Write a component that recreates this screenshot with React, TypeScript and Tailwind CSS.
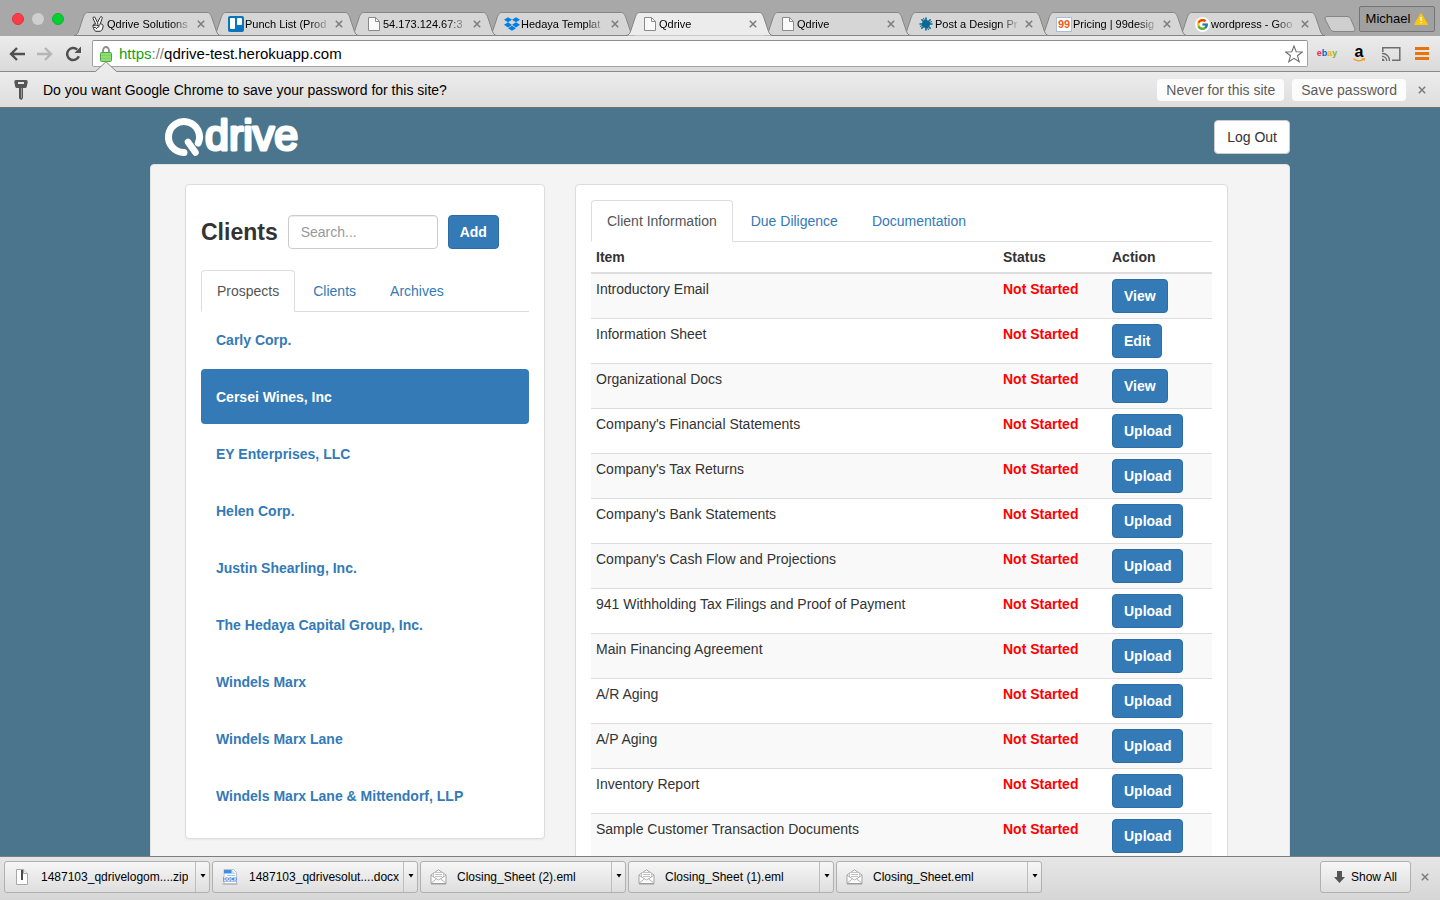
import type { ReactNode } from "react";
import clsx from "clsx";
import { FaDropbox } from "react-icons/fa";
import { FcGoogle } from "react-icons/fc";

interface IBrowserTab {
  title: string;
  icon: ReactNode;
  active?: boolean;
}

interface IDownload {
  name: string;
  icon: ReactNode;
}

interface IItem {
  name: string;
  action: string;
}

const clients = [
  "Carly Corp.",
  "Cersei Wines, Inc",
  "EY Enterprises, LLC",
  "Helen Corp.",
  "Justin Shearling, Inc.",
  "The Hedaya Capital Group, Inc.",
  "Windels Marx",
  "Windels Marx Lane",
  "Windels Marx Lane & Mittendorf, LLP",
];

const items: IItem[] = [
  { name: "Introductory Email", action: "View" },
  { name: "Information Sheet", action: "Edit" },
  { name: "Organizational Docs", action: "View" },
  { name: "Company's Financial Statements", action: "Upload" },
  { name: "Company's Tax Returns", action: "Upload" },
  { name: "Company's Bank Statements", action: "Upload" },
  { name: "Company's Cash Flow and Projections", action: "Upload" },
  { name: "941 Withholding Tax Filings and Proof of Payment", action: "Upload" },
  { name: "Main Financing Agreement", action: "Upload" },
  { name: "A/R Aging", action: "Upload" },
  { name: "A/P Aging", action: "Upload" },
  { name: "Inventory Report", action: "Upload" },
  { name: "Sample Customer Transaction Documents", action: "Upload" },
];

function PageIcon() {
  return (
    <svg width="12" height="14" viewBox="0 0 12 14" fill="#fafafa" stroke="#8a8a8a">
      <path d="M.5 .5H7.5L11.5 4.5V13.5H.5Z" />
      <path d="M7.5 .5V4.5H11.5" fill="none" />
    </svg>
  );
}

function PeaceIcon() {
  return (
    <svg width="12" height="16" viewBox="0 0 12 16" fill="#f4f4f4" stroke="#333" strokeLinejoin="round">
      <path d="M3.600 8L1 2.500Q.8 1 2 .9Q2.800 .8 3.200 1.800L5.500 6.500L8 1.500Q8.800 .2 9.800 .8Q10.600 1.300 10.200 2.400L8.300 7.500Q11 8 11.200 10Q11.200 13.500 8.500 15.300H3.500Q1 13 .9 9.800Q1.200 7.600 3.600 8Z" />
      <path d="M1.200 9.500Q4 8.500 7 9.800Q7.500 11.200 5 11.500M5.500 6.500L6 8.800M2 11.500Q3.800 10.500 4.800 13M8.300 7.500L7.500 9.500" fill="none" />
    </svg>
  );
}

function TrelloIcon() {
  return (
    <svg width="16" height="16" viewBox="0 0 16 16" fill="#fff">
      <rect width="16" height="16" rx="2" fill="#0a74bd" />
      <rect x="2" y="2" width="5" height="11" rx="1" />
      <rect x="9" y="2" width="5" height="7" rx="1" />
    </svg>
  );
}

function BurstIcon() {
  return (
    <svg width="14" height="14" viewBox="0 0 14 14" stroke="#0a6a93" strokeLinecap="round">
      <circle cx="7" cy="7" r="3.6" fill="#0a6a93" />
      <path d="M7 1V13M1 7H13M2.8 2.8L11.2 11.2M11.2 2.8L2.8 11.2" strokeWidth="1.6" />
      <path d="M4.6 1.3L9.4 12.7M12.7 4.6L1.3 9.4" strokeWidth="1" />
    </svg>
  );
}

function CloseIcon() {
  return (
    <svg width="8" height="8" viewBox="0 0 8 8" stroke="#7c7c7c" strokeWidth="1.5">
      <path d="M.8 .8L7.2 7.2M7.2 .8L.8 7.2" />
    </svg>
  );
}

function EnvelopeIcon() {
  return (
    <svg width="17" height="16" viewBox="0 0 17 16" fill="#fbfbfb" stroke="#a3a3a3" strokeLinejoin="round">
      <path d="M1 6L8.5 .8L16 6V14.5H1Z" />
      <path d="M3.5 8V3.5H13.5V8" stroke="#c4c4c4" />
      <path d="M5 5.5H12M5 7.5H12" stroke="#c4c4c4" />
      <path d="M1 6.3L8.5 11L16 6.3M1 14.3L6.5 9.8M16 14.3L10.5 9.8" fill="none" stroke="#b4b4b4" />
      <path d="M1 15H16" stroke="#9a9a9a" />
    </svg>
  );
}

function ZipIcon() {
  return (
    <svg width="12" height="16" viewBox="0 0 12 16">
      <path d="M.5 .5H7.5L11.5 4.5V15.5H.5Z" fill="#fff" stroke="#a8a8a8" />
      <path d="M7.5 .5V4.5H11.5" fill="#eee" stroke="#a8a8a8" />
      <path d="M6 1V11" stroke="#4a4a4a" strokeWidth="2" />
    </svg>
  );
}

function DocxIcon() {
  return (
    <svg width="16" height="16" viewBox="0 0 16 16">
      <path d="M2 .5H11.5L14.5 3.5V15H2Z" fill="#fff" stroke="#b9c3cf" />
      <path d="M2 1H10V4.5H2Z" fill="#3f8fe8" />
      <path d="M9.5 .8L14.3 5H9.5Z" fill="#c5dcf7" />
      <path d="M5 6.5H13" stroke="#a9c6ea" />
      <rect x="1" y="8" width="14" height="4.5" fill="#4a88d8" />
      <text x="8" y="12" textAnchor="middle" fontSize="4.5" fontWeight="700" fill="#fff" fontFamily="Liberation Sans, sans-serif">
        DOCX
      </text>
      <path d="M.5 15H15.5" stroke="#a8a8a8" />
    </svg>
  );
}

function KeyIcon() {
  return (
    <svg width="14" height="20" viewBox="0 0 14 20">
      <path
        fillRule="evenodd"
        fill="#555"
        d="M2 0H12Q14 0 13.7 2L12.8 6.5Q12.5 8 11 8H9V18L7.5 20L5 18.5V8H3Q1.500 8 1.200 6.500L.3 2Q0 0 2 0ZM4 2V4H10V2Z"
      />
      <path d="M7.500 8V18" stroke="#9a9a9a" />
    </svg>
  );
}

const browserTabs: IBrowserTab[] = [
  { title: "Qdrive Solutions", icon: <PeaceIcon /> },
  { title: "Punch List (Prod", icon: <TrelloIcon /> },
  { title: "54.173.124.67:3", icon: <PageIcon /> },
  { title: "Hedaya Templat", icon: <FaDropbox size={16} color="#007ee5" /> },
  { title: "Qdrive", icon: <PageIcon />, active: true },
  { title: "Qdrive", icon: <PageIcon /> },
  { title: "Post a Design Pr", icon: <BurstIcon /> },
  {
    title: "Pricing | 99desig",
    icon: (
      <span className="border border-[#a9bedb] bg-white px-px text-[11px] leading-[13px] font-bold text-[#f15a22]">
        99
      </span>
    ),
  },
  {
    title: "wordpress - Goo",
    icon: (
      <span className="rounded-full bg-white p-px">
        <FcGoogle size={13} />
      </span>
    ),
  },
];

const downloads: IDownload[] = [
  { name: "1487103_qdrivelogom....zip", icon: <ZipIcon /> },
  { name: "1487103_qdrivesolut....docx", icon: <DocxIcon /> },
  { name: "Closing_Sheet (2).eml", icon: <EnvelopeIcon /> },
  { name: "Closing_Sheet (1).eml", icon: <EnvelopeIcon /> },
  { name: "Closing_Sheet.eml", icon: <EnvelopeIcon /> },
];

function BrowserTab({ tab, order }: { tab: IBrowserTab; order: number }) {
  return (
    <div
      className="relative -mr-[9px] flex h-6 w-[147px] min-w-0 items-center pr-4 pl-[15px]"
      style={{ zIndex: tab.active ? 20 : order }}
    >
      <svg
        className="absolute inset-0 h-full w-full"
        viewBox="0 0 147 24"
        preserveAspectRatio="none"
        fill={tab.active ? "#ececec" : "#d6d6d6"}
        stroke="#858585"
      >
        <path d="M0 23.500C3 23.500 4 21 5 18L9 6C10.500 2 11.500 .5 14 .5H133C135.500 .5 136.500 2 138 6L142 18C143 21 144 23.500 147 23.500" />
        {!tab.active && <path d="M0 23.500H147" />}
      </svg>
      <span className="relative flex w-[18px] shrink-0 justify-center">{tab.icon}</span>
      <button
        className={clsx(
          "relative min-w-0 flex-1 text-left text-[11px] whitespace-nowrap",
          "[mask-image:linear-gradient(to_right,black_75%,transparent)]"
        )}
      >
        {tab.title}
      </button>
      <button aria-label={`Close ${tab.title}`} className="relative pl-1">
        <CloseIcon />
      </button>
    </div>
  );
}

function TabStrip() {
  return (
    <div className="flex h-9 shrink-0 bg-[#a8a8a8]">
      <div className="flex w-[74px] shrink-0 gap-2 pt-[13px] pl-3">
        <span className="size-3 rounded-full border border-[#e0323c] bg-[#fc3d49]" />
        <span className="size-3 rounded-full bg-[#cfcfcf]" />
        <span className="size-3 rounded-full border border-[#0fb52c] bg-[#05cf33]" />
      </div>
      <div className="flex min-w-0 flex-1 items-end">
        {browserTabs.map((tab, index) => (
          <BrowserTab tab={tab} order={browserTabs.length - index} key={index} />
        ))}
        <button aria-label="New tab" className="mb-1 ml-2 shrink-0">
          <svg width="32" height="16" viewBox="0 0 32 16" fill="#cfcfcf" stroke="#858585">
            <path d="M3 .5H23Q25.500 .5 26.500 2.500L31 13Q31.500 15.500 29 15.500H10Q7.500 15.500 6.500 13.500L1 3Q.5 .5 3 .5Z" />
          </svg>
        </button>
      </div>
      <button className="mt-[6px] mr-[5px] flex h-[26px] w-[76px] shrink-0 items-center justify-center gap-1 rounded-xs border border-[#757575] bg-[#a0a0a0] text-[13px]">
        Michael
        <svg width="14" height="12" viewBox="0 0 14 12">
          <path d="M7 .5L13.500 11.500H.5Z" fill="#fdc70c" stroke="#fdc70c" strokeLinejoin="round" />
          <path d="M7 4V8M7 9V10.300" stroke="#fff" strokeWidth="1.400" />
        </svg>
      </button>
    </div>
  );
}

function Toolbar() {
  return (
    <div className="relative z-10 flex h-9 shrink-0 items-center border-b border-[#8a8a8a] bg-linear-to-b from-[#ececec] to-[#dadada] pr-[11px] pl-[9px]">
      <button aria-label="Back" className="mr-3">
        <svg width="16" height="14" viewBox="0 0 16 14" fill="none" stroke="#505050" strokeWidth="2.400">
          <path d="M16 7H2.500M8 1L2 7L8 13" />
        </svg>
      </button>
      <button aria-label="Forward" className="mr-3">
        <svg width="16" height="14" viewBox="0 0 16 14" fill="none" stroke="#b5b5b5" strokeWidth="2.400">
          <path d="M0 7H13.500M8 1L14 7L8 13" />
        </svg>
      </button>
      <button aria-label="Reload" className="mr-[10px]">
        <svg width="17" height="16" viewBox="0 0 17 16">
          <path d="M13.800 10.200A6 6 0 1 1 12.200 3.600" fill="none" stroke="#505050" strokeWidth="2.500" />
          <path d="M16 .5V7H9.500Z" fill="#505050" />
        </svg>
      </button>
      <div className="relative flex h-[27px] min-w-0 flex-1 items-center rounded-xs border border-[#a3a3a3] border-t-[#8f8f8f] bg-white pr-1 pl-[7px]">
        <svg width="12" height="16" viewBox="0 0 12 16">
          <path d="M3 8V4.500A3 3.500 0 0 1 9 4.500V8" fill="none" stroke="#8c8c8c" strokeWidth="1.800" />
          <rect x=".5" y="6.500" width="11" height="9" rx="1" fill="#8ddd72" stroke="#4fa83c" />
          <path d="M1 9.500H11M1 12.500H11" stroke="#7fd068" />
        </svg>
        <a href="#" className="ml-[7px] flex-1 pt-px text-[15px] text-black">
          <span className="text-[#12a012]">https</span>
          <span className="text-[#808080]">://</span>
          qdrive-test.herokuapp.com
        </a>
        <button aria-label="Bookmark this page">
          <svg width="18" height="18" viewBox="0 0 18 18" fill="#fff" stroke="#6e6e6e" strokeWidth="1.100">
            <path d="M9 1L11.200 6.700L17.300 7L12.500 10.800L14.200 16.700L9 13.300L3.800 16.700L5.500 10.800L.7 7L6.800 6.700Z" />
          </svg>
        </button>
      </div>
      <button className="ml-2 w-[22px] text-[9px] font-bold">
        <span className="text-[#e53238]">e</span>
        <span className="text-[#0064d2]">b</span>
        <span className="text-[#f5af02]">a</span>
        <span className="text-[#86b817]">y</span>
      </button>
      <button className="ml-[13px] flex w-4 flex-col items-center text-base leading-3 font-bold">
        a
        <svg width="12" height="4" viewBox="0 0 12 4" fill="none" stroke="#f79a1c" strokeWidth="1.300">
          <path d="M.5 .8Q6 5 11 1M8.500 .8H11.300V2.500" />
        </svg>
      </button>
      <button aria-label="Cast" className="ml-[14px]">
        <svg width="20" height="16" viewBox="0 0 20 16" fill="none" stroke="#6e6e6e" strokeWidth="1.500">
          <path d="M1.800 6V1.800H18.800V14.200H11" />
          <path d="M1 7.500A7 7 0 0 1 8.500 15M1 10.300A4.500 4.500 0 0 1 5.700 15" strokeWidth="1.300" />
          <path d="M1 12.500A2.500 2.500 0 0 1 3.500 15H1Z" fill="#6e6e6e" stroke="none" />
        </svg>
      </button>
      <button aria-label="Menu" className="ml-[14px]">
        <svg width="14" height="13" viewBox="0 0 14 13" stroke="#e8730c" strokeWidth="3">
          <path d="M0 1.500H14M0 6.500H14M0 11.500H14" />
        </svg>
      </button>
      {/* pointer from the info bar to the lock */}
      <svg className="absolute top-[25px] left-[94px]" width="24" height="12" viewBox="0 0 24 12">
        <path d="M1 11L12 .8L23 11V12H1Z" fill="#ebebeb" />
        <path d="M0 10.500H1.500L12 .8L22.500 10.500H24" fill="none" stroke="#8a8a8a" />
      </svg>
    </div>
  );
}

function InfoBar() {
  return (
    <div className="flex h-9 shrink-0 items-center border-b border-[#707070] bg-linear-to-b from-[#ececec] to-[#dedede] pr-[14px] pl-[14px] text-sm">
      <KeyIcon />
      <p className="ml-[15px] flex-1">
        Do you want Google Chrome to save your password for this site?
      </p>
      <button className="h-[22px] rounded-sm bg-[#fcfcfc] px-[9px] text-[#5c5c5c]">
        Never for this site
      </button>
      <button className="ml-2 h-[22px] rounded-sm bg-[#fcfcfc] px-[9px] text-[#5c5c5c]">
        Save password
      </button>
      <button aria-label="Dismiss" className="ml-3">
        <CloseIcon />
      </button>
    </div>
  );
}

function Logo() {
  return (
    <svg width="144" height="56" viewBox="0 0 144 56" role="img" aria-label="Qdrive">
      <g fill="none" stroke="#fff" strokeWidth="7" strokeLinecap="round">
        <path d="M20 44.500A15.500 15.500 0 1 1 34.300 35" />
        <path d="M24 34L31.500 44.500" strokeWidth="6.500" />
      </g>
      <text
        x="41"
        y="42"
        fontSize="43"
        fontFamily="Liberation Sans, Arial, sans-serif"
        fill="#fff"
        stroke="#fff"
        strokeWidth="3"
        strokeLinejoin="round"
      >
        drive
      </text>
    </svg>
  );
}

function NavTabs({ tabs, label }: { tabs: string[]; label: string }) {
  return (
    <nav aria-label={label} className="flex border-b border-[#ddd]">
      {tabs.map((tab, index) => (
        <a
          href="#"
          key={tab}
          className={clsx(
            "-mb-px mr-[2px] rounded-t border px-[15px] py-[10px] leading-5",
            index === 0
              ? "border-[#ddd] border-b-white bg-white text-[#555]"
              : "border-transparent text-[#337ab7]"
          )}
        >
          {tab}
        </a>
      ))}
    </nav>
  );
}

function PrimaryButton({ children }: { children: ReactNode }) {
  return (
    <button className="h-[34px] rounded border border-[#2e6da4] bg-[#337ab7] px-[11px] text-sm font-bold text-white">
      {children}
    </button>
  );
}

function ClientsPanel() {
  return (
    <section className="min-w-0 rounded border border-[#ddd] bg-white p-[15px] shadow-xs">
      <div className="mt-[15px] mb-[21px] flex items-center gap-[10px]">
        <h3 className="text-[23px] leading-6 font-bold">Clients</h3>
        <input
          type="text"
          aria-label="Search clients"
          placeholder="Search..."
          className="h-[34px] w-[150px] min-w-0 rounded border border-[#ccc] bg-white px-3 shadow-[inset_0_1px_1px_rgba(0,0,0,0.075)] placeholder:text-[#999]"
        />
        <PrimaryButton>Add</PrimaryButton>
      </div>
      <NavTabs label="Client groups" tabs={["Prospects", "Clients", "Archives"]} />
      <ul className="flex flex-col gap-[2px]">
        {clients.map((client) => (
          <li key={client}>
            <a
              href="#"
              className={clsx(
                "flex h-[55px] items-center rounded px-[15px] font-bold",
                client === "Cersei Wines, Inc"
                  ? "bg-[#337ab7] text-white"
                  : "text-[#337ab7]"
              )}
            >
              {client}
            </a>
          </li>
        ))}
      </ul>
    </section>
  );
}

function ItemsPanel() {
  return (
    <section className="min-w-0 rounded border border-[#ddd] bg-white p-[15px] shadow-xs">
      <NavTabs
        label="Client sections"
        tabs={["Client Information", "Due Diligence", "Documentation"]}
      />
      <table className="w-full text-left leading-5">
        <thead>
          <tr className="border-b-2 border-[#ddd]">
            <th className="p-[5px]">Item</th>
            <th className="w-[109px] p-[5px]">Status</th>
            <th className="w-[105px] p-[5px]">Action</th>
          </tr>
        </thead>
        <tbody>
          {items.map((item) => (
            <tr key={item.name} className="border-t border-[#ddd] align-top odd:bg-[#f9f9f9]">
              <td className="p-[5px]">{item.name}</td>
              <td className="p-[5px] font-bold text-[#f00]">Not Started</td>
              <td className="p-[5px]">
                <div className="flex">
                  <PrimaryButton>{item.action}</PrimaryButton>
                </div>
              </td>
            </tr>
          ))}
        </tbody>
      </table>
    </section>
  );
}

function DownloadBar() {
  return (
    <footer className="flex h-11 shrink-0 items-start gap-[2px] border-t border-[#7d7d7d] bg-linear-to-b from-[#e6e6e6] to-[#d6d6d6] pt-1 pr-[3px] pl-1 text-xs">
      {downloads.map((file) => (
        <div
          key={file.name}
          className="flex h-8 w-[206px] min-w-0 rounded-[3px] border border-[#b0b0b0] bg-linear-to-b from-[#f6f6f6] to-[#dedede]"
        >
          <button className="flex min-w-0 flex-1 items-center pl-2">
            <span className="mr-[10px] flex w-[18px] shrink-0 justify-center">{file.icon}</span>
            <span className="truncate">{file.name}</span>
          </button>
          <button
            aria-label={`Options for ${file.name}`}
            className="flex w-[14px] shrink-0 justify-center border-l border-[#bdbdbd] pt-3"
          >
            <svg width="6" height="4" viewBox="0 0 6 4">
              <path d="M.5 0H5.500L3 3.500Z" />
            </svg>
          </button>
        </div>
      ))}
      <button className="ml-auto flex h-8 w-[91px] shrink-0 items-center justify-center gap-[6px] rounded-[3px] border border-[#b0b0b0] bg-linear-to-b from-[#f6f6f6] to-[#dedede]">
        <svg width="11" height="12" viewBox="0 0 11 12" fill="#555">
          <path d="M3 0H8V6H11L5.500 12L0 6H3Z" />
        </svg>
        Show All
      </button>
      <button aria-label="Close downloads bar" className="flex h-8 items-center px-2">
        <CloseIcon />
      </button>
    </footer>
  );
}

function App() {
  return (
    <div className="flex h-screen flex-col overflow-hidden font-['Liberation_Sans',Arial,sans-serif] text-black">
      <TabStrip />
      <Toolbar />
      <InfoBar />
      <main className="min-h-0 flex-1 overflow-hidden bg-[#4a758c] text-sm text-[#333]">
        <div className="mx-auto max-w-[1140px]">
          <header className="flex h-14 items-end justify-between pl-[14px]">
            <Logo />
            <button className="mb-[10px] h-[34px] rounded border border-[#ccc] bg-white px-3">
              Log Out
            </button>
          </header>
          <div className="grid grid-cols-[360fr_653fr] items-start gap-[30px] rounded border border-[#e3e3e3] bg-[#f4f4f4] pt-[19px] pr-[61px] pb-5 pl-[34px]">
            <ClientsPanel />
            <ItemsPanel />
          </div>
        </div>
      </main>
      <DownloadBar />
    </div>
  );
}

export default App;
